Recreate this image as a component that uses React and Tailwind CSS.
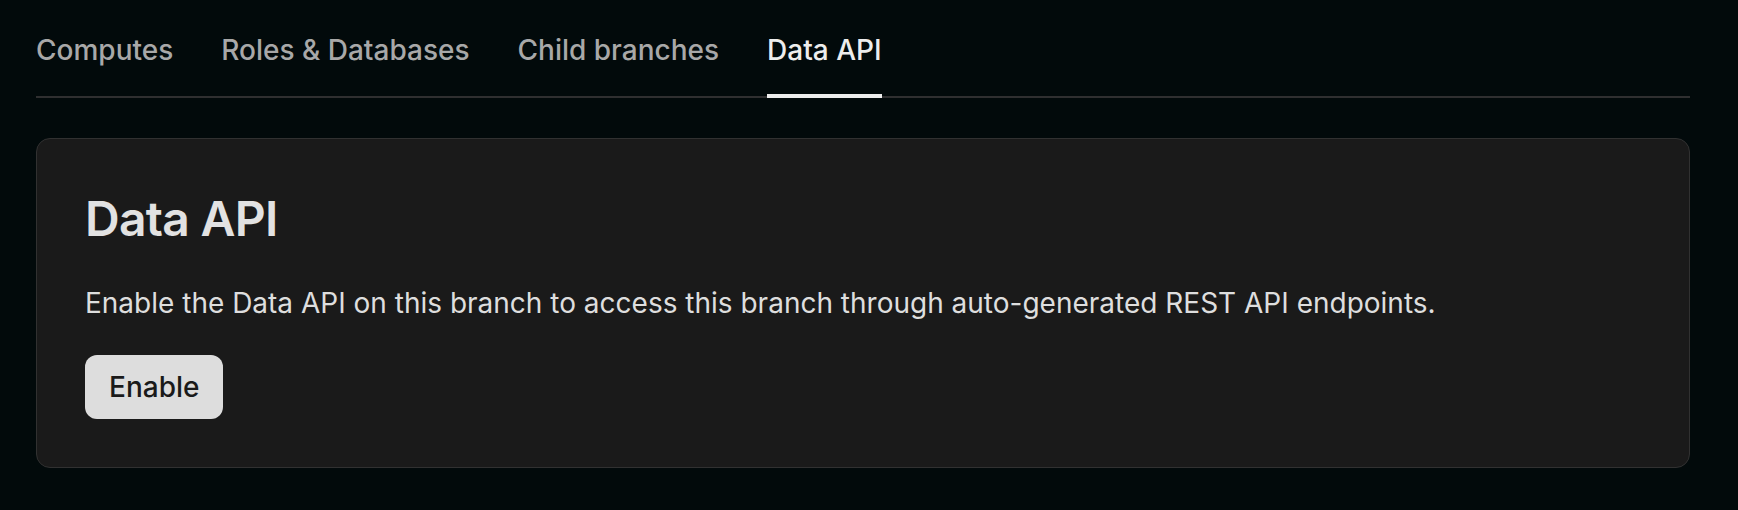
import { useState } from 'react';

const tabs = ['Computes', 'Roles & Databases', 'Child branches', 'Data API'];

export default function App() {
  const [active, setActive] = useState('Data API');

  return (
    <div className="h-[510px] w-full overflow-hidden bg-[#020a0b] pl-[36px] pt-[30px] font-['Inter',sans-serif] antialiased">
      <div className="w-[1654px]">
        <nav className="flex gap-12 border-b-2 border-[#2f2f30]">
          {tabs.map((t) => (
            <button
              key={t}
              type="button"
              onClick={() => setActive(t)}
              className={
                '-mb-[2px] border-b-4 pb-6 text-[28px] leading-[40px] font-medium ' +
                (active === t ? 'border-[#ededed] text-[#ededed]' : 'border-transparent text-[#a8a8a8]')
              }
            >
              {t}
            </button>
          ))}
        </nav>

        <section className="mt-[40px] rounded-[14px] border border-[#313131] bg-[#1a1a1a] p-12">
          <h2 className="text-[48px] leading-[64px] font-semibold tracking-[-0.015em] text-[#e2e2e2]">Data API</h2>
          <p className="mt-8 text-[28px] leading-[40px] text-[#dedede]">
            Enable the Data API on this branch to access this branch through auto-generated REST API endpoints.
          </p>
          <button
            type="button"
            className="mt-8 block rounded-[12px] bg-[#dddddd] px-6 py-3 text-[28px] leading-[40px] font-medium text-[#1a1a1a]"
          >
            Enable
          </button>
        </section>
      </div>
    </div>
  );
}
